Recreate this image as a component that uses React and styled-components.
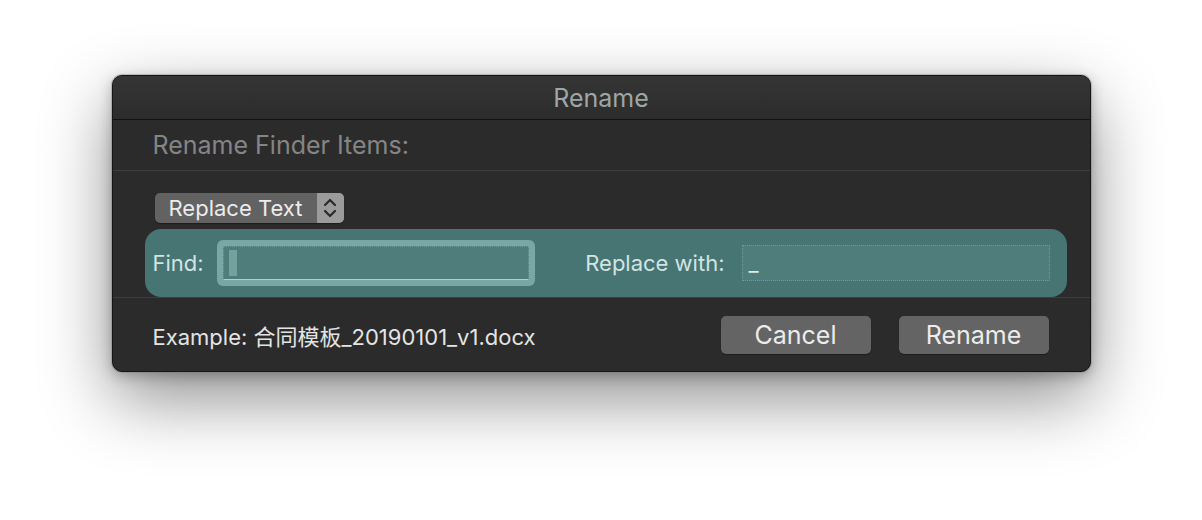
import React from "react";
import styled, { createGlobalStyle } from "styled-components";

const GlobalStyle = createGlobalStyle`
  html, body {
    margin: 0;
    padding: 0;
    background: #ffffff;
  }
  body {
    font-family: Inter, "Noto Sans CJK SC", "Liberation Sans", sans-serif;
    -webkit-font-smoothing: antialiased;
  }
`;

export default function App() {
  return (
    <>
      <GlobalStyle />
      <Page>
        <Window>
          <TitleBar>Rename</TitleBar>
          <Heading>Rename Finder Items:</Heading>
          <Body>
            <Popup>
              <PopupLabel>Replace Text</PopupLabel>
              <Stepper>
                <svg width="16" height="24" viewBox="0 0 16 24" fill="none">
                  <path d="M3 9 L8 4 L13 9" stroke="#2a2a2a" strokeWidth="2.2" strokeLinecap="round" strokeLinejoin="round" />
                  <path d="M3 15 L8 20 L13 15" stroke="#2a2a2a" strokeWidth="2.2" strokeLinecap="round" strokeLinejoin="round" />
                </svg>
              </Stepper>
            </Popup>
            <Band>
              <FieldLabel $space={13}>Find:</FieldLabel>
              <FocusRing>
                <Field>
                  <Caret />
                </Field>
              </FocusRing>
              <Spacer />
              <FieldLabel $space={17}>Replace with:</FieldLabel>
              <Field $plain>_</Field>
            </Band>
          </Body>
          <Footer>
            <Example>Example: 合同模板_20190101_v1.docx</Example>
            <Buttons>
              <Button>Cancel</Button>
              <Button>Rename</Button>
            </Buttons>
          </Footer>
        </Window>
      </Page>
    </>
  );
}

const Page = styled.div`
  width: 1202px;
  height: 520px;
  display: flex;
  justify-content: center;
  align-items: flex-start;
  padding-top: 75px;
  box-sizing: border-box;
  overflow: hidden;
`;

const Window = styled.div`
  width: 979px;
  box-sizing: border-box;
  background: #2b2b2b;
  border: 1px solid #161616;
  border-radius: 10px;
  overflow: hidden;
  box-shadow: 0 0 0 1px rgba(120, 120, 120, 0.35), 0 26px 70px rgba(0, 0, 0, 0.45),
    0 4px 14px rgba(0, 0, 0, 0.25);
`;

const TitleBar = styled.div`
  height: 43px;
  display: flex;
  align-items: center;
  justify-content: center;
  background: linear-gradient(#353535, #2c2c2c);
  border-bottom: 1px solid #121212;
  color: #9ea6a6;
  font-size: 25px;
`;

const Heading = styled.div`
  height: 50px;
  display: flex;
  align-items: center;
  padding-left: 40px;
  border-bottom: 1px solid #3e3e3e;
  color: #858585;
  font-size: 25px;
`;

const Body = styled.div`
  padding: 22px 23px 0 32px;
  border-bottom: 1px solid #3e3e3e;
  display: flex;
  flex-direction: column;
  align-items: flex-start;
  gap: 6px;
`;

const Popup = styled.div`
  margin-left: 10px;
  height: 30px;
  width: 189px;
  display: flex;
  border-radius: 5px;
  overflow: hidden;
  background: #626262;
  box-shadow: 0 1px 1px rgba(0, 0, 0, 0.35);
`;

const PopupLabel = styled.div`
  flex: 1;
  display: flex;
  align-items: center;
  padding-left: 14px;
  color: #ececec;
  font-size: 22px;
`;

const Stepper = styled.div`
  width: 27px;
  display: flex;
  align-items: center;
  justify-content: center;
  background: #9b9b9b;
`;

const Band = styled.div`
  align-self: stretch;
  height: 68px;
  display: flex;
  align-items: center;
  padding: 0 17px 0 8px;
  background: #467574;
  border-radius: 16px;
`;

const FieldLabel = styled.div`
  color: #d2e4e3;
  font-size: 22px;
  margin-right: ${(p) => p.$space}px;
  white-space: nowrap;
`;

const Spacer = styled.div`
  flex: 1;
`;

const FocusRing = styled.div`
  width: 318px;
  height: 46px;
  box-sizing: border-box;
  padding: 6px;
  border-radius: 6px;
  background: #78a7a5;
  display: flex;
`;

const Field = styled.div`
  flex: ${(p) => (p.$plain ? "0 0 308px" : "1")};
  height: ${(p) => (p.$plain ? "36px" : "auto")};
  box-sizing: border-box;
  background: #4e7d7b;
  border: 1px dotted #6f9896;
  border-bottom: ${(p) => (p.$plain ? "1px dotted #6f9896" : "1px solid #b0cfcd")};
  display: flex;
  align-items: center;
  padding-left: ${(p) => (p.$plain ? "6px" : "5px")};
  color: #dbeaea;
  font-size: 22px;
`;

const Caret = styled.div`
  width: 8px;
  height: 26px;
  background: #74a09e;
`;

const Footer = styled.div`
  height: 73px;
  display: flex;
  align-items: center;
  justify-content: space-between;
  padding: 0 41px 0 40px;
`;

const Example = styled.div`
  color: #e4e4e4;
  font-size: 22px;
`;

const Buttons = styled.div`
  display: flex;
  gap: 28px;
`;

const Button = styled.button`
  width: 150px;
  height: 38px;
  border: none;
  border-radius: 5px;
  background: #646464;
  color: #ececec;
  font-family: inherit;
  font-size: 25px;
  box-shadow: 0 1px 1px rgba(0, 0, 0, 0.35);
  cursor: pointer;
`;
